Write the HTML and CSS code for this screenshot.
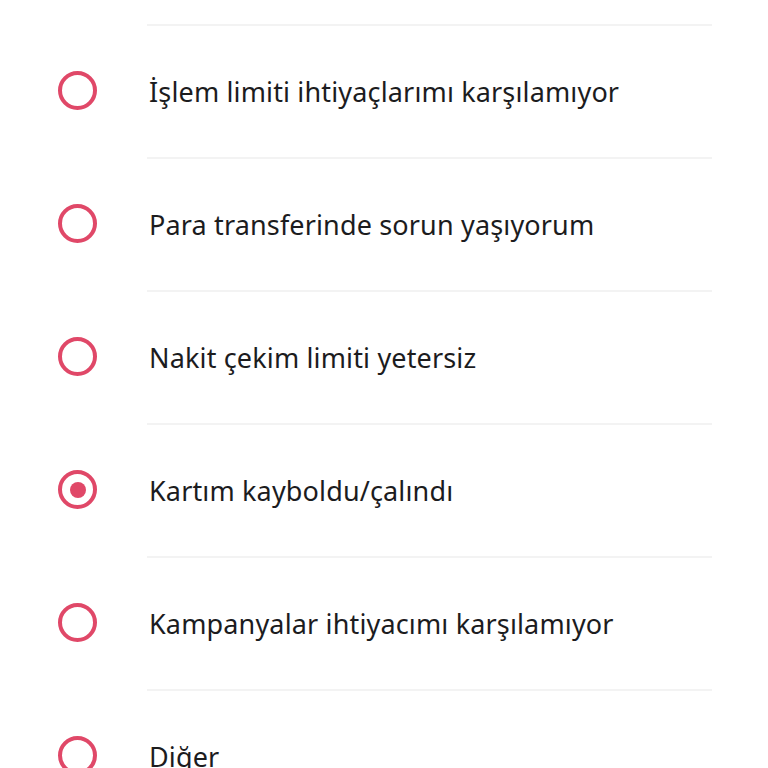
FILE: index.html
```html
<!DOCTYPE html>
<html lang="tr">
<head>
  <meta charset="UTF-8" />
  <meta name="viewport" content="width=device-width, initial-scale=1.0"/>
  <title>Kart iptal nedeni</title>
  <link rel="stylesheet" href="styles.css">
</head>
<body>
  <ul class="options">
    <li class="option">
      <span class="radio"></span>
      <span class="label">İşlem limiti ihtiyaçlarımı karşılamıyor</span>
    </li>
    <li class="option">
      <span class="radio"></span>
      <span class="label">Para transferinde sorun yaşıyorum</span>
    </li>
    <li class="option">
      <span class="radio"></span>
      <span class="label">Nakit çekim limiti yetersiz</span>
    </li>
    <li class="option selected">
      <span class="radio"></span>
      <span class="label">Kartım kayboldu/çalındı</span>
    </li>
    <li class="option">
      <span class="radio"></span>
      <span class="label">Kampanyalar ihtiyacımı karşılamıyor</span>
    </li>
    <li class="option">
      <span class="radio"></span>
      <span class="label">Diğer</span>
    </li>
  </ul>
</body>
</html>
```

FILE: styles.css
```css
html, body {
  height: 100%;
}
body {
  font-family: "Noto Sans", Lato, sans-serif;
  background-color: #ffffff;
  color: #1c1c1e;
  margin: 0;
  padding: 0;
  overflow: hidden;
}
.options {
  list-style: none;
  margin: 24px 0 0;
  padding: 0;
}
.option {
  display: flex;
  height: 133px;
}
.radio {
  flex: none;
  width: 31px;
  height: 31px;
  margin: 0 50px 0 58px;
  align-self: center;
  border: 4px solid #e04868;
  border-radius: 50%;
  position: relative;
}
.option.selected .radio::after {
  content: "";
  position: absolute;
  left: 50%;
  top: 50%;
  width: 16px;
  height: 16px;
  margin: -8px 0 0 -8px;
  border-radius: 50%;
  background-color: #e04868;
}
.label {
  flex: 1;
  margin-right: 56px;
  border-top: 2px solid #f3f3f3;
  display: flex;
  align-items: center;
  padding-left: 2px;
  font-size: 27px;
  letter-spacing: 0.15px;
  font-variant-ligatures: none;
}
```
